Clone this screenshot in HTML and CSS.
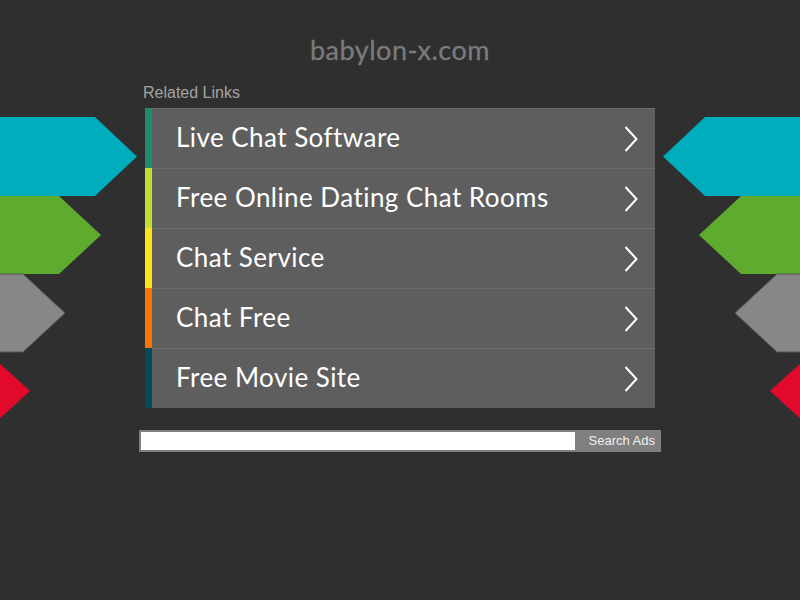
FILE: index.html
```html
<!DOCTYPE html>
<html>
<head>
<meta charset="utf-8">
<link rel="stylesheet" href="styles.css">
</head>
<body>
<svg class="decor decor-left" width="140" height="320" viewBox="0 0 140 320">
  <polygon points="0,0 95,0 137,39.5 95,79 0,79" fill="#00adbd"/>
  <polygon points="0,79 59,79 101,118 59,157 0,157" fill="#5eab30"/>
  <polygon points="-2,157 23,157 65,196 23,235 -2,235" fill="#878787" stroke="#575757" stroke-width="1"/>
  <polygon points="-13,235 30,274 -13,313" fill="#e10a2d"/>
</svg>
<svg class="decor decor-right" width="140" height="320" viewBox="0 0 140 320">
  <polygon points="0,0 95,0 137,39.5 95,79 0,79" fill="#00adbd"/>
  <polygon points="0,79 59,79 101,118 59,157 0,157" fill="#5eab30"/>
  <polygon points="-2,157 23,157 65,196 23,235 -2,235" fill="#878787" stroke="#575757" stroke-width="1"/>
  <polygon points="-13,235 30,274 -13,313" fill="#e10a2d"/>
</svg>
<div class="page">
  <h1 class="domain">babylon-x.com</h1>
  <div class="related">
    <div class="related-title">Related Links</div>
    <ul class="links">
      <li class="link c1"><span class="bar"></span><span class="label">Live Chat Software</span><svg class="chev" width="14" height="26" viewBox="0 0 14 26"><polyline points="1.5,1 12.5,13 1.5,25" fill="none" stroke="#fff" stroke-width="2"/></svg></li>
      <li class="link c2"><span class="bar"></span><span class="label">Free Online Dating Chat Rooms</span><svg class="chev" width="14" height="26" viewBox="0 0 14 26"><polyline points="1.5,1 12.5,13 1.5,25" fill="none" stroke="#fff" stroke-width="2"/></svg></li>
      <li class="link c3"><span class="bar"></span><span class="label">Chat Service</span><svg class="chev" width="14" height="26" viewBox="0 0 14 26"><polyline points="1.5,1 12.5,13 1.5,25" fill="none" stroke="#fff" stroke-width="2"/></svg></li>
      <li class="link c4"><span class="bar"></span><span class="label">Chat Free</span><svg class="chev" width="14" height="26" viewBox="0 0 14 26"><polyline points="1.5,1 12.5,13 1.5,25" fill="none" stroke="#fff" stroke-width="2"/></svg></li>
      <li class="link c5"><span class="bar"></span><span class="label">Free Movie Site</span><svg class="chev" width="14" height="26" viewBox="0 0 14 26"><polyline points="1.5,1 12.5,13 1.5,25" fill="none" stroke="#fff" stroke-width="2"/></svg></li>
    </ul>
  </div>
  <form class="search">
    <input class="search-input" type="text">
    <button class="search-btn" type="button">Search Ads</button>
  </form>
</div>
</body>
</html>
```
FILE: styles.css
```css
html, body {
  margin: 0;
  padding: 0;
  background: #2f2f2f;
  height: 100%;
}
body {
  position: relative;
  overflow: hidden;
  font-family: "Liberation Sans", Arial, sans-serif;
}
.decor {
  position: absolute;
  top: 117px;
}
.decor-left { left: 0; }
.decor-right { right: 0; transform: scaleX(-1); }

.page {
  width: 522px;
  margin: 0 auto;
  display: flex;
  flex-direction: column;
  align-items: center;
}
.domain {
  margin: 33px 0 0;
  height: 34px;
  font-family: Lato, "Open Sans", sans-serif;
  font-weight: 400;
  font-size: 27px;
  line-height: 34px;
  color: #7b7b7b;
  letter-spacing: 0.5px;
  -webkit-text-stroke: 0.3px #7b7b7b;
}
.related {
  width: 514px;
  margin-top: 17px;
}
.related-title {
  font-size: 16px;
  line-height: 18px;
  color: #a3a3a3;
  margin-bottom: 6px;
}
.links {
  list-style: none;
  margin: 0 0 0 2px;
  padding: 0;
  width: 510px;
}
.link {
  display: flex;
  align-items: center;
  height: 59px;
  border-top: 1px solid #6c6c6c;
  background: #5e5e5e;
}
.bar {
  align-self: stretch;
  width: 7px;
  margin-top: -1px;
  flex: none;
}
.c1 .bar { background: #1e8c6f; }
.c2 .bar { background: #c3dd32; }
.c3 .bar { background: #fde319; }
.c4 .bar { background: #ff7400; }
.c5 .bar { background: #024a5c; }
.label {
  flex: 1;
  padding-left: 24px;
  padding-bottom: 3px;
  font-family: Lato, "Open Sans", sans-serif;
  font-size: 26px;
  color: #ffffff;
  letter-spacing: 0.45px;
}
.chev {
  margin-right: 17px;
  flex: none;
}
.search {
  display: flex;
  margin: 22px 0 0;
  width: 522px;
  height: 22px;
  background: #7f7f7f;
  box-sizing: border-box;
  padding: 2px 0 2px 2px;
}
.search-input {
  flex: 1;
  border: 0;
  margin: 0;
  padding: 0;
  background: #ffffff;
  height: 18px;
}
.search-btn {
  border: 0;
  margin: 0;
  padding: 0 6px 0 14px;
  background: #7f7f7f;
  color: #f0f0f0;
  font-family: "Liberation Sans", Arial, sans-serif;
  font-size: 13px;
  height: 18px;
  line-height: 18px;
}
```
